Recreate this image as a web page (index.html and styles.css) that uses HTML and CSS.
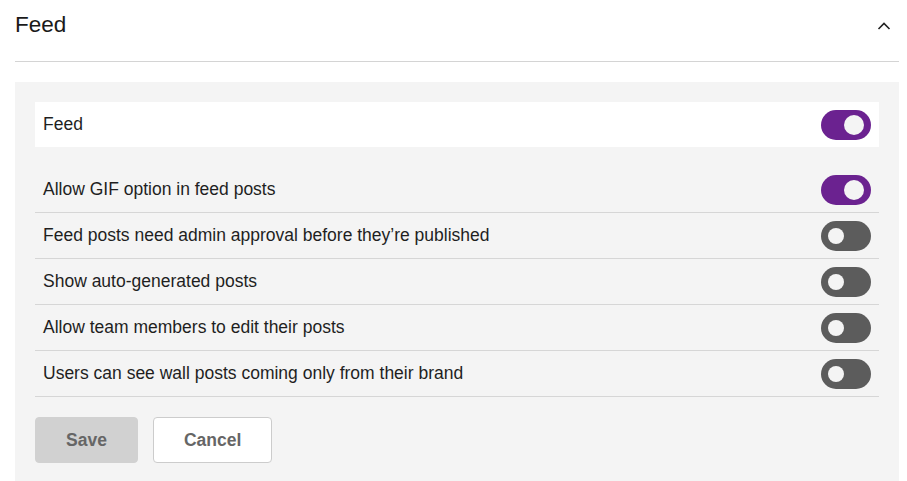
FILE: index.html
```html
<!DOCTYPE html>
<html lang="en">
  <head>
    <meta charset="UTF-8" />
    <meta name="viewport" content="width=device-width, initial-scale=1.0" />
    <title>Feed settings</title>
    <link rel="stylesheet" href="styles.css">
  </head>
  <body>
    <section class="panel">
      <header class="panel-header">
        <h1>Feed</h1>
        <button class="collapse" aria-label="Collapse">
          <svg width="14" height="8" viewBox="0 0 14 8">
            <path d="M1.5 7 L7 1.5 L12.5 7" fill="none" stroke="#222" stroke-width="1.6" />
          </svg>
        </button>
      </header>

      <div class="settings">
        <div class="master-row">
          <span>Feed</span>
          <span class="toggle on"></span>
        </div>

        <ul class="options">
          <li>
            <span>Allow GIF option in feed posts</span>
            <span class="toggle on"></span>
          </li>
          <li>
            <span>Feed posts need admin approval before they’re published</span>
            <span class="toggle"></span>
          </li>
          <li>
            <span>Show auto-generated posts</span>
            <span class="toggle"></span>
          </li>
          <li>
            <span>Allow team members to edit their posts</span>
            <span class="toggle"></span>
          </li>
          <li>
            <span>Users can see wall posts coming only from their brand</span>
            <span class="toggle"></span>
          </li>
        </ul>

        <div class="actions">
          <button class="btn btn-save" disabled>Save</button>
          <button class="btn btn-cancel">Cancel</button>
        </div>
      </div>
    </section>
  </body>
</html>
```

FILE: styles.css
```css
:root {
  font-family: "Liberation Sans", Arial, sans-serif;
  font-size: 17.5px;
  color: #1f1f1f;
}

body {
  margin: 0;
  background: #fff;
}

.panel {
  padding: 0 8px 0 15px;
}

.panel-header {
  display: flex;
  align-items: center;
  justify-content: space-between;
  height: 50px;
  padding-bottom: 11px;
  border-bottom: 1px solid #d4d4d4;

  h1 {
    margin: 0;
    font-size: 22.5px;
    font-weight: 400;
    color: #1a1a1a;
  }
}

.collapse {
  display: inline-flex;
  padding: 0;
  margin: 2px 8px 0 0;
  border: 0;
  background: transparent;
  cursor: pointer;
}

.settings {
  margin-top: 20px;
  padding: 20px;
  background: #f4f4f4;
}

.master-row,
.options li {
  display: flex;
  align-items: center;
  justify-content: space-between;
  padding: 0 8px;
}

.master-row {
  height: 45px;
  background: #fff;
}

.options {
  list-style: none;
  margin: 20px 0 0;
  padding: 0;

  li {
    height: 45px;
    border-bottom: 1px solid #d6d6d6;
  }
}

.toggle {
  --track: #5c5c5c;

  position: relative;
  flex: none;
  width: 50px;
  height: 30px;
  border-radius: 15px;
  background: var(--track);

  &::after {
    content: "";
    position: absolute;
    top: 7px;
    left: 7px;
    width: 16px;
    height: 16px;
    border-radius: 50%;
    background: #f4f4f4;
  }

  &.on {
    --track: #6b2290;

    &::after {
      top: 5px;
      left: auto;
      right: 7px;
      width: 20px;
      height: 20px;
    }
  }
}

.actions {
  display: flex;
  gap: 15px;
  margin-top: 20px;
}

.btn {
  height: 46px;
  padding: 0 30px;
  font-family: inherit;
  font-size: 17.5px;
  font-weight: 700;
  color: #666;
  border: 1px solid #ccc;
  border-radius: 4px;
  cursor: pointer;
}

.btn-save {
  background: #d1d1d1;
  border-color: #d1d1d1;
}

.btn-cancel {
  background: #fff;
}
```
